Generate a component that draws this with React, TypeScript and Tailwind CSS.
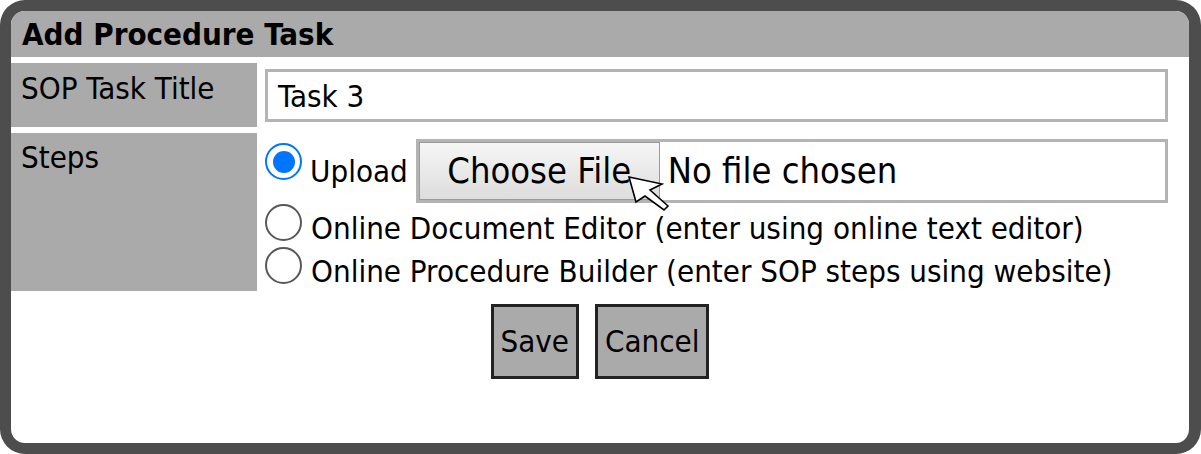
const font = "font-['DejaVu_Sans_Condensed','DejaVu_Sans',sans-serif] font-stretch-condensed";

function Radio({ checked }: { checked?: boolean }) {
  if (checked) {
    return (
      <span className="flex h-[37px] w-[37px] shrink-0 items-center justify-center rounded-full border-[2.5px] border-[#0075ff] bg-white">
        <span className="h-[22px] w-[22px] rounded-full bg-[#0075ff]" />
      </span>
    );
  }
  return <span className="h-[37px] w-[37px] shrink-0 rounded-full border-[2px] border-[#585858] bg-white" />;
}

function Cursor() {
  return (
    <svg className="absolute left-[208px] top-[33px]" width="46" height="42" viewBox="0 0 46 42">
      <polygon
        points="2,2 35,9 23,15 41,31 37,35 18,21 9,27"
        fill="#fff"
        stroke="#000"
        strokeWidth="1.6"
        strokeLinejoin="miter"
      />
    </svg>
  );
}

export default function App() {
  return (
    <div className={`${font} h-[454px] w-[1201px] overflow-hidden rounded-[25px] border-[11px] border-r-[12px] border-[#4d4d4d] bg-white text-black`}>
      <div className="flex h-[46px] items-center bg-[#aaaaaa] pl-[11px] text-[31px] font-bold">
        Add Procedure Task
      </div>

      <div className="mt-[6px] flex flex-col gap-[6px] text-[31px] leading-[36px]">
        <div className="flex h-[64px]">
          <div className="w-[246px] shrink-0 bg-[#aaaaaa] pl-[10px] pt-[7px]">SOP Task Title</div>
          <div className="ml-[8px] pt-[6px]">
            <div className="flex h-[53px] w-[903px] items-center border-[3px] border-[#b4b4b4] pl-[10px]">
              Task 3
            </div>
          </div>
        </div>

        <div className="flex h-[158px]">
          <div className="w-[246px] shrink-0 bg-[#aaaaaa] pl-[10px] pt-[6px]">Steps</div>
          <div className="ml-[8px] flex w-[903px] flex-col pt-[6px]">
            <div className="flex items-center">
              <span className="mb-[19px]">
                <Radio checked />
              </span>
              <span className="ml-[8px]">Upload</span>
              <div className="relative ml-[8px] flex h-[64px] flex-1 items-center border-[3px] border-[#b4b4b4]">
                <div className="flex h-full w-[241px] items-center justify-center border border-[#9a9a9a] bg-gradient-to-b from-[#f6f6f6] to-[#dddddd] text-[36px]">
                  Choose File
                </div>
                <span className="ml-[8px] text-[36px]">No file chosen</span>
                <Cursor />
              </div>
            </div>
            <div className="mt-[1px] flex items-start">
              <Radio />
              <span className="ml-[9px] mt-[6px]">Online Document Editor (enter using online text editor)</span>
            </div>
            <div className="mt-[1px] flex items-start">
              <Radio />
              <span className="ml-[9px] mt-[6px]">Online Procedure Builder (enter SOP steps using website)</span>
            </div>
          </div>
        </div>
      </div>

      <div className="mt-[13px] flex justify-center gap-[16px] text-[31px]">
        <button className="h-[75px] border-[3px] border-[#222] bg-[#aaaaaa] px-[7px]">Save</button>
        <button className="h-[75px] border-[3px] border-[#222] bg-[#aaaaaa] px-[7px]">Cancel</button>
      </div>
    </div>
  );
}
